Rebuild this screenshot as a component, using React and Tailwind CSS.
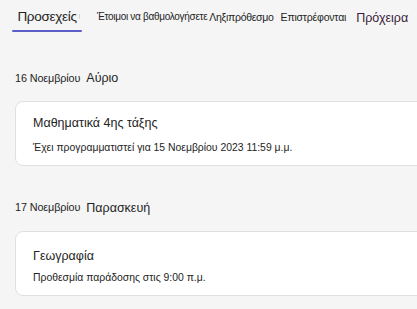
const TABS = [
  { label: "Έτοιμοι να βαθμολογήσετε", cls: "ml-[17px] text-[10px] tracking-[-0.3px]" },
  { label: "Ληξιπρόθεσμο", cls: "ml-[2px] text-[10.5px] tracking-[-0.3px]" },
  { label: "Επιστρέφονται", cls: "ml-[7px] text-[10.5px] tracking-[-0.2px]" },
  { label: "Πρόχειρα", cls: "ml-[10px] text-[12.5px] text-[#3b1a3a]" },
];

const GROUPS = [
  {
    date: "16 Νοεμβρίου",
    day: "Αύριο",
    title: "Μαθηματικά 4ης τάξης",
    note: "Έχει προγραμματιστεί για 15 Νοεμβρίου 2023 11:59 μ.μ.",
    top: "mt-[40px]",
    gap: "mt-[16px]",
    pad: "pt-[15px]",
    noteGap: "mt-[14px]",
  },
  {
    date: "17 Νοεμβρίου",
    day: "Παρασκευή",
    title: "Γεωγραφία",
    note: "Προθεσμία παράδοσης στις 9:00 π.μ.",
    top: "mt-[36px]",
    gap: "mt-[17px]",
    pad: "pt-[18px]",
    noteGap: "mt-[10px]",
  },
];

export default function App() {
  return (
    <div
      className="w-[417px] h-[309px] overflow-hidden bg-[#f5f5f5] text-[#242424]"
      style={{ fontFamily: '"Liberation Sans", Arial, sans-serif' }}
    >
      {/* Tabs */}
      <div className="flex items-end h-[32px] pl-[12px]">
        <div className="flex flex-col items-center">
          <span className="px-[2px] text-[13.5px] tracking-[-0.3px] leading-none">Προσεχείς</span>
          <div className="mt-[7px] h-[2px] w-[70px] rounded-full bg-[#5b5fc7]" />
        </div>
        <div className="self-start mt-[14px] -ml-[3px] h-[5px] w-px bg-[#d6d6d6]" />
        {TABS.map((t) => (
          <span key={t.label} className={`self-start mt-[12px] leading-none ${t.cls}`}>
            {t.label}
          </span>
        ))}
      </div>

      {/* Groups */}
      <div className="pl-[15px]">
        {GROUPS.map((g) => (
          <div key={g.date} className={g.top}>
            <div className="flex items-end gap-[6px] leading-none">
              <span className="text-[10.8px] tracking-[-0.1px] -translate-y-px">{g.date}</span>
              <span className="text-[12.5px]">{g.day}</span>
            </div>
            <div
              className={`${g.gap} ${g.pad} mr-[-20px] h-[65px] rounded-lg border border-[#e0e0e0] bg-white pl-[17px]`}
            >
              <div className="text-[12.5px] leading-none">{g.title}</div>
              <div className={`${g.noteGap} text-[10.4px] leading-none`}>{g.note}</div>
            </div>
          </div>
        ))}
      </div>
    </div>
  );
}
